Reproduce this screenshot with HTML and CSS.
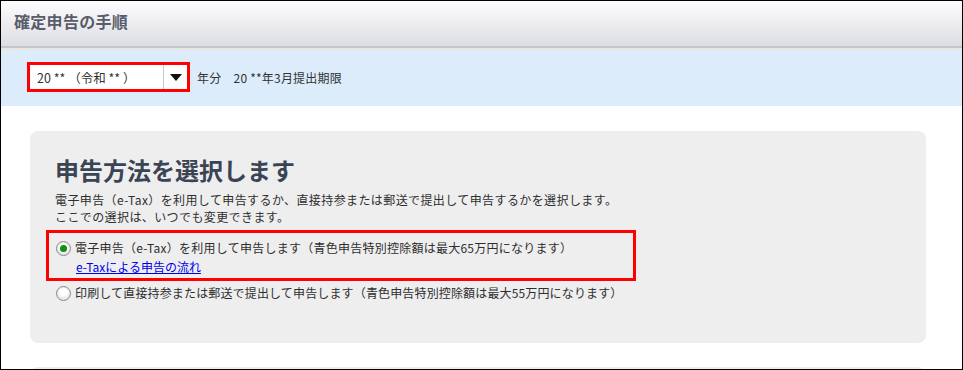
FILE: index.html
```html
<!doctype html>
<html lang="ja">
<head>
<meta charset="utf-8">
<title>確定申告の手順</title>
<meta name="viewport" content="width=device-width,initial-scale=1">
<link rel="stylesheet" href="styles.css">
</head>
<body>
<div class="frame">
  <header class="top">
    <h1>確定申告の手順</h1>
  </header>

  <div class="yearbar">
    <div class="select">
      <span class="select-text">20 ** （令和 ** ）</span>
      <span class="select-btn"><span class="tri"></span></span>
    </div>
    <span class="yearinfo">年分　20 **年3月提出期限</span>
  </div>

  <main class="main">
    <section class="card">
      <h2>申告方法を選択します</h2>
      <p class="desc">電子申告（e-Tax）を利用して申告するか、直接持参または郵送で提出して申告するかを選択します。<br>ここでの選択は、いつでも変更できます。</p>

      <div class="choice highlight">
        <label class="opt"><span class="radio on"></span>電子申告（e-Tax）を利用して申告します（青色申告特別控除額は最大65万円になります）</label>
        <a class="flow" href="#">e-Taxによる申告の流れ</a>
      </div>
      <div class="choice">
        <label class="opt"><span class="radio"></span>印刷して直接持参または郵送で提出して申告します（青色申告特別控除額は最大55万円になります）</label>
      </div>
    </section>
    <section class="card next"></section>
  </main>
</div>
</body>
</html>
```

FILE: styles.css
```css
*{box-sizing:border-box;margin:0;padding:0}
html,body{
  height:100%;
  font-family:"Noto Sans CJK JP","Noto Sans",sans-serif;
  color:#333;
  background:#fff;
  overflow:hidden;
}
.frame{
  width:963px;
  height:370px;
  border:1px solid #000;
  overflow:hidden;
  background:#fff;
}

/* header */
.top{
  height:47px;
  padding-left:13px;
  display:flex;
  align-items:center;
  background:linear-gradient(#fdfdfe,#dcdde3);
  border-bottom:2px solid #c5c6c9;
}
.top h1{font-size:16px;font-weight:bold;color:#585d69;letter-spacing:.3px;margin-top:-6px}

/* year selector band */
.yearbar{
  height:58px;
  border-top:2px solid #e6e6e2;
  background:#dcecfb;
  display:flex;
  align-items:center;
  padding:0 0 2px 26px;
}
.select{
  width:163px;
  height:30px;
  border:3px solid #f00;
  background:#fff;
  display:flex;
  align-items:center;
}
.select-text{flex:1;font-size:12.5px;padding-left:7px;color:#333;white-space:pre}
.select-btn{
  width:24px;height:100%;
  border-left:1px solid #c8c8c8;
  display:flex;align-items:center;justify-content:center;
}
.tri{
  width:0;height:0;
  border-left:6px solid transparent;
  border-right:6px solid transparent;
  border-top:7px solid #111;
}
.yearinfo{font-size:12px;margin-left:7px;color:#333;white-space:pre;letter-spacing:.2px}

/* main */
.main{padding:25px 36px 0 29px}
.card{
  background:#eeeeee;
  border-radius:8px;
  padding:24px 25px 18px;
  height:212px;
}
.card.next{margin-top:24px;height:40px}
.card h2{font-size:24px;line-height:30px;color:#3b4455;font-weight:bold}
.desc{font-size:12px;line-height:17px;margin-top:6px;letter-spacing:.4px;color:#2e2e2e}

.choice{margin-left:-9px;padding:0 0 0 8px}
.highlight{
  margin-top:5px;
  width:590px;
  height:51px;
  border:3px solid #f00;
  padding:5px 0 0 7px;
}
.choice + .choice{margin-top:2px;padding-left:10px}
.opt{display:flex;align-items:center;font-size:12px;line-height:20px;letter-spacing:.25px;color:#2e2e2e}
.choice + .choice .opt{letter-spacing:.15px}
.flow{
  display:block;
  margin-left:20px;
  font-size:12px;line-height:18px;
  color:#0000ee;
  text-decoration:underline;
}
.radio{
  width:15px;height:15px;
  border-radius:50%;
  border:1px solid #8a8a8a;
  background:radial-gradient(circle at 50% 35%,#fff 35%,#cfcfcf 100%);
  box-shadow:inset 0 0 0 1px #e8e8e8;
  margin-right:4px;
  position:relative;
  flex:none;
}
.radio.on::after{
  content:"";
  position:absolute;
  left:3px;top:3px;
  width:7px;height:7px;
  border-radius:50%;
  background:#119111;
}
```
